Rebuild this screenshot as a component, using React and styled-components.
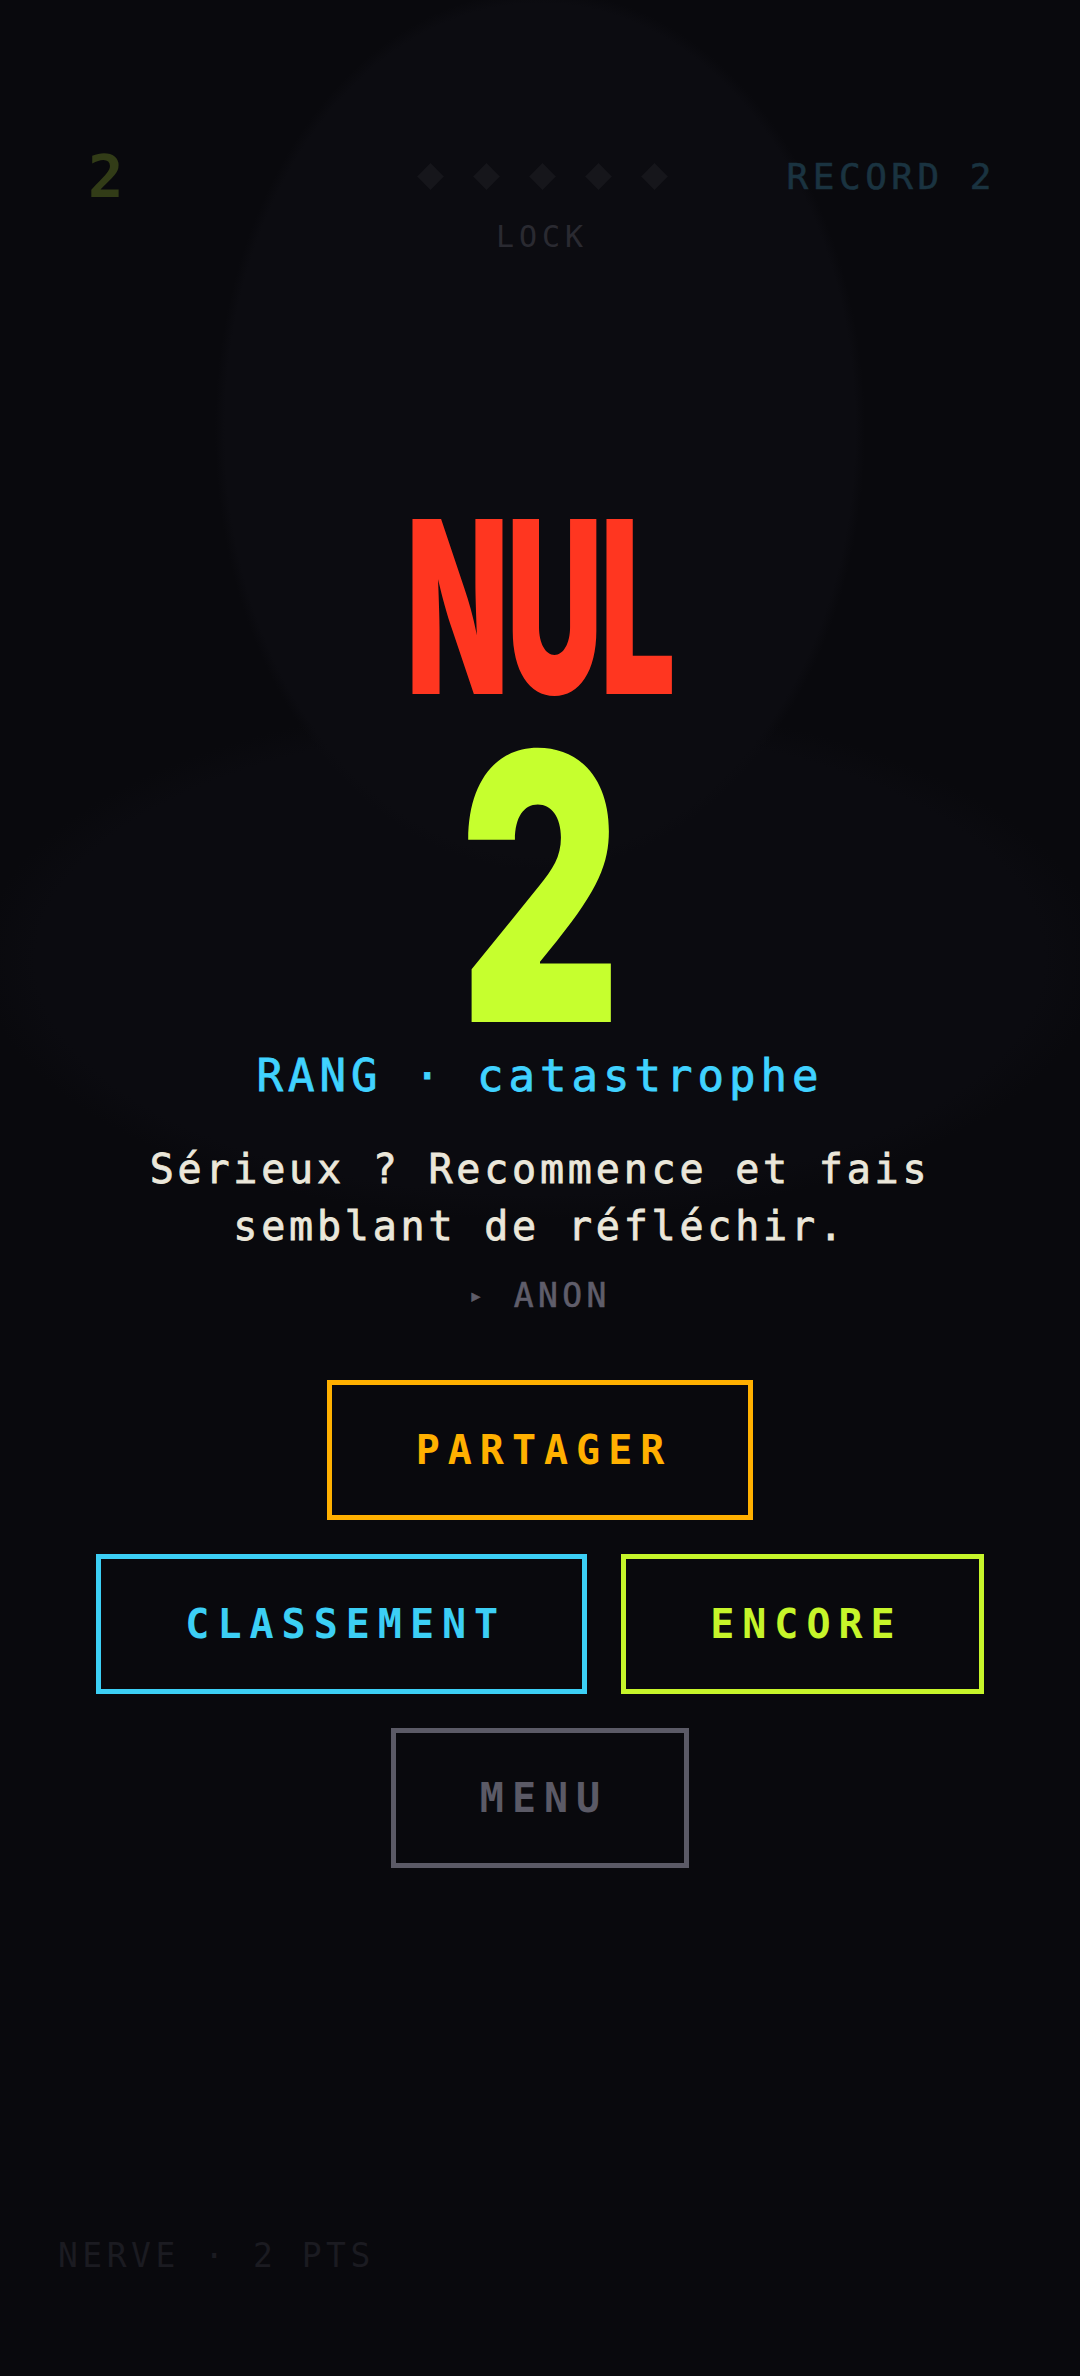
import React from 'react'
import styled, { createGlobalStyle } from 'styled-components'

const GlobalStyle = createGlobalStyle`
  html, body {
    margin: 0;
    padding: 0;
    background: #0a0a0e;
  }
  * {
    box-sizing: border-box;
  }
`

const mono = `"DejaVu Sans Mono", "Liberation Mono", monospace`
const display = `Inter, "DejaVu Sans", "Liberation Sans", sans-serif`

// page + faint halo behind the score
const Page = styled.div`
  min-height: 2376px;
  display: flex;
  flex-direction: column;
  font-family: ${mono};
  background:
    radial-gradient(ellipse 325px 440px at 50% 430px, #0c0c11 0 97%, transparent 100%),
    radial-gradient(ellipse 560px 260px at 50% 960px, #0b0b10 0 90%, transparent 100%),
    #09090d;
`

// top HUD
const TopBar = styled.header`
  display: grid;
  grid-template-columns: 1fr auto 1fr;
  align-items: start;
  padding: 163px 84px 0 88px;
`

const Score = styled.span`
  font-size: 59px;
  font-weight: 700;
  line-height: 27px;
  color: #323c17;
`

const Record = styled.span`
  justify-self: end;
  font-size: 36px;
  line-height: 27px;
  letter-spacing: 4.5px;
  color: #1a3340;
  -webkit-text-stroke: 0.6px #1a3340;
`

const LockBox = styled.div`
  display: flex;
  flex-direction: column;
  align-items: center;
`

const Diamonds = styled.div`
  height: 27px;
  display: flex;
  align-items: center;
  gap: 37px;
`

const Diamond = styled.i`
  width: 19px;
  height: 19px;
  background: ${p => (p.$on ? '#c6ff2e' : '#16161b')};
  transform: rotate(45deg);
`

const LockLabel = styled.span`
  margin-top: 32px;
  font-size: 30px;
  line-height: 1;
  letter-spacing: 5px;
  color: #2a2a31;
`

// verdict block
const Hero = styled.main`
  display: flex;
  flex-direction: column;
  align-items: center;
  margin-top: 259px;
`

const Verdict = styled.h1`
  margin: 0;
  font-family: ${display};
  font-weight: 900;
  font-size: 240px;
  line-height: 0.8;
  letter-spacing: -4px;
  color: #ff3620;
  transform: scaleX(0.555);
`

const BigScore = styled.div`
  margin-top: 36px;
  font-family: ${display};
  font-weight: 900;
  font-size: 372px;
  line-height: 0.8;
  color: #c6ff2e;
  transform: scaleX(0.67);
`

const Rank = styled.p`
  margin: 17px 0 0;
  font-size: 44px;
  line-height: 1;
  letter-spacing: 5px;
  color: #40d2ff;
  -webkit-text-stroke: 0.8px #40d2ff;
`

const Quote = styled.p`
  margin: 43px 0 0;
  max-width: 840px;
  text-align: center;
  font-size: 40px;
  line-height: 57px;
  letter-spacing: 3.8px;
  color: #ebe7da;
  -webkit-text-stroke: 0.8px #ebe7da;
`

const Author = styled.p`
  margin: 24px 0 0;
  font-size: 33px;
  line-height: 1;
  letter-spacing: 4.4px;
  color: #5f5d6a;
  -webkit-text-stroke: 0.6px #5f5d6a;

  b {
    font-weight: 400;
    font-size: 22px;
    vertical-align: 4px;
    margin-right: 27px;
  }
`

// actions
const Actions = styled.nav`
  display: flex;
  flex-direction: column;
  align-items: center;
  gap: 34px;
  margin-top: 68px;
`

const Row = styled.div`
  display: flex;
  gap: 34px;
`

const Button = styled.button`
  height: 140px;
  padding: 0 76px 0 84px;
  background: #09090d;
  border: 5px solid ${p => p.$color};
  color: ${p => p.$color};
  font-family: ${mono};
  font-size: 40px;
  font-weight: 700;
  letter-spacing: 8px;
  cursor: pointer;
`

const Footer = styled.footer`
  margin-top: auto;
  padding: 0 58px 104px;
  font-size: 33px;
  line-height: 1;
  letter-spacing: 4.5px;
  color: #1b1b21;
`

export default function App() {
  const streak = [false, false, false, false, false]

  return (
    <Page>
      <GlobalStyle />
      <TopBar>
        <Score>2</Score>
        <LockBox>
          <Diamonds>
            {streak.map((on, i) => (
              <Diamond key={i} $on={on} />
            ))}
          </Diamonds>
          <LockLabel>LOCK</LockLabel>
        </LockBox>
        <Record>RECORD 2</Record>
      </TopBar>

      <Hero>
        <Verdict>NUL</Verdict>
        <BigScore>2</BigScore>
        <Rank>RANG · catastrophe</Rank>
        <Quote>Sérieux ? Recommence et fais semblant de réfléchir.</Quote>
        <Author><b>▸</b>ANON</Author>
      </Hero>

      <Actions>
        <Button $color="#ffb000">PARTAGER</Button>
        <Row>
          <Button $color="#3ccff5">CLASSEMENT</Button>
          <Button $color="#c6f52a">ENCORE</Button>
        </Row>
        <Button $color="#5b5a66">MENU</Button>
      </Actions>

      <Footer>NERVE · 2 PTS</Footer>
    </Page>
  )
}
